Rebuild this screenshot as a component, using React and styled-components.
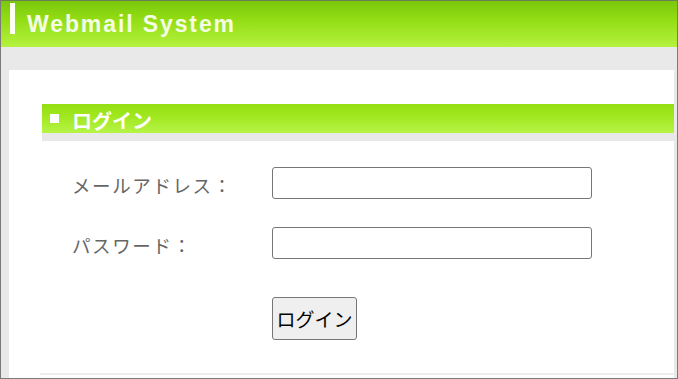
import React from "react";
import styled, { createGlobalStyle } from "styled-components";

const Global = createGlobalStyle`
  html, body { margin: 0; padding: 0; background: #ffffff; }
  * { box-sizing: border-box; }
`;

const Frame = styled.div`
  width: 678px;
  height: 379px;
  border: 1px solid #7a7a7a;
  border-top-color: #6f7f55;
  background: #e9e9e9;
  display: flex;
  flex-direction: column;
  overflow: hidden;
`;

const Header = styled.header`
  height: 46px;
  flex: none;
  background: linear-gradient(to bottom, #7ac80c 0%, #93dd14 40%, #b4f23f 100%);
  display: flex;
  align-items: flex-start;
  padding: 2px 0 0 9px;
`;

const HeaderBar = styled.span`
  width: 5px;
  height: 31px;
  background: #fbfff2;
  flex: none;
`;

const HeaderTitle = styled.h1`
  margin: 0 0 0 12px;
  font-family: "Liberation Sans", Arial, sans-serif;
  font-weight: 700;
  font-size: 23px;
  letter-spacing: 1.9px;
  line-height: 42px;
  color: #f4fde4;
`;

const Panel = styled.main`
  flex: 1;
  margin: 23px 3px 0 8px;
  background: #ffffff;
  padding-top: 34px;
  display: flex;
  flex-direction: column;
`;

const SectionHead = styled.h2`
  margin: 0 0 0 33px;
  height: 37px;
  background: linear-gradient(to bottom, #94de12 0%, #a2e821 45%, #b6f447 100%) top / 100% 29px no-repeat;
  border-bottom: 8px solid #e8e8e8;
  display: flex;
  align-items: flex-start;
  padding: 0 0 0 8px;
  font-family: "Noto Sans CJK JP", sans-serif;
  font-weight: 700;
  font-size: 20px;
  color: #ffffff;
`;

const HeadInner = styled.span`
  height: 29px;
  display: flex;
  align-items: center;
  gap: 13px;
  line-height: 29px;
  padding-top: 3px;
`;

const Square = styled.span`
  width: 9px;
  height: 9px;
  background: #ffffff;
  flex: none;
  margin-top: -3px;
`;

const Form = styled.form`
  margin: 26px 0 0 63px;
  display: grid;
  grid-template-columns: 200px 320px;
  row-gap: 28px;
  align-items: center;
`;

const Label = styled.label`
  font-family: "Noto Sans CJK JP", sans-serif;
  font-size: 18.5px;
  letter-spacing: 1.6px;
  color: #666666;
  padding-top: 4px;
`;

const Input = styled.input`
  width: 320px;
  height: 32px;
  border: 1px solid #767676;
  border-radius: 3px;
  background: #fff;
  padding: 0 4px;
  font-size: 16px;
`;

const ButtonCell = styled.div`
  grid-column: 2;
  margin-top: 10px;
`;

const Button = styled.button`
  height: 43px;
  width: 85px;
  padding: 0;
  border: 1px solid #767676;
  border-radius: 3px;
  background: #efefef;
  font-family: "Noto Sans CJK JP", sans-serif;
  font-size: 19px;
  color: #000;
  line-height: 1;
`;

const FootLine = styled.hr`
  margin: 33px 0 0 31px;
  border: none;
  border-top: 2px solid #ececec;
  height: 0;
`;

export default function App() {
  return (
    <>
      <Global />
      <Frame>
        <Header>
          <HeaderBar />
          <HeaderTitle>Webmail System</HeaderTitle>
        </Header>
        <Panel>
          <SectionHead>
            <HeadInner>
              <Square />
              ログイン
            </HeadInner>
          </SectionHead>
          <Form onSubmit={(e) => e.preventDefault()}>
            <Label htmlFor="mail">メールアドレス：</Label>
            <Input id="mail" type="text" />
            <Label htmlFor="pw">パスワード：</Label>
            <Input id="pw" type="password" />
            <ButtonCell>
              <Button type="submit">ログイン</Button>
            </ButtonCell>
          </Form>
          <FootLine />
        </Panel>
      </Frame>
    </>
  );
}
